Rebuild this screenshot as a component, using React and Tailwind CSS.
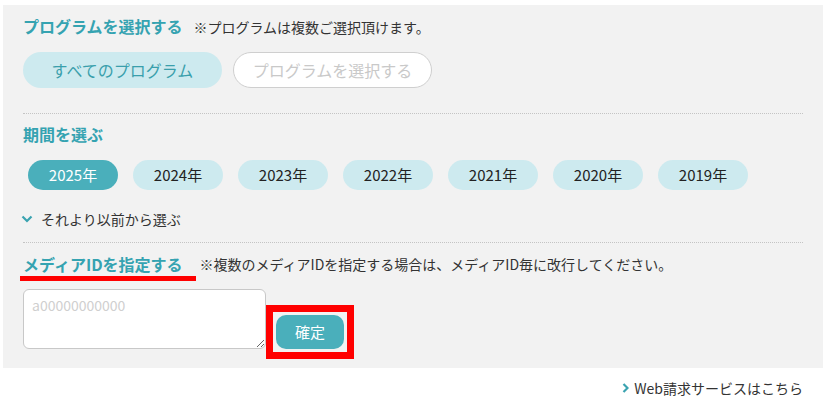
import React from "react";

const years = ["2025年", "2024年", "2023年", "2022年", "2021年", "2020年", "2019年"];

function Heading({children}) {
    return (
        <h2 className="text-[16px] leading-6 font-bold text-[#35a3b1] whitespace-nowrap">
            {children}
        </h2>
    )
}

function Note({children, className = ""}) {
    return (
        <span className={`text-[14px] leading-6 text-[#333] whitespace-nowrap ${className}`}>
            {children}
        </span>
    )
}

function Divider({className = ""}) {
    return <div className={`border-t border-dotted border-[#c4c4c4] ${className}`}/>
}

export default function App() {
    return (
        <div className="w-[829px] h-[403px] bg-white font-['Noto_Sans_CJK_JP','Noto_Sans',sans-serif] overflow-hidden">
            <div className="ml-[3px] mt-[5px] w-[820px] bg-[#f2f2f2] pl-5 pr-5 pt-[9px] pb-[19px]">
                {/* programs */}
                <div className="flex items-baseline gap-[11px]">
                    <Heading>プログラムを選択する</Heading>
                    <Note>※プログラムは複数ご選択頂けます。</Note>
                </div>
                <div className="flex gap-[11px] mt-[13px]">
                    <button className="w-[199px] h-9 rounded-full bg-[#cdeaef] text-[#3a9fac] text-[16px]">
                        すべてのプログラム
                    </button>
                    <button className="w-[199px] h-9 rounded-full bg-white border border-[#cfcfcf] text-[#c9c9c9] text-[16px]">
                        プログラムを選択する
                    </button>
                </div>

                <Divider className="mt-[25px]"/>

                {/* period */}
                <div className="mt-2">
                    <Heading>期間を選ぶ</Heading>
                </div>
                <div className="flex gap-[15px] pl-[5px] mt-[14px]">
                    {years.map((y, i) => (
                        <button
                            key={y}
                            className={i === 0
                                ? "w-[90px] h-[30px] rounded-full bg-[#4aafbb] text-white text-[15px]"
                                : "w-[90px] h-[30px] rounded-full bg-[#cdeaef] text-[#222] text-[15px]"}
                        >
                            {y}
                        </button>
                    ))}
                </div>
                <div className="flex items-center mt-[19px] h-5 -ml-[2px]">
                    <svg width="12" height="8" viewBox="0 0 12 8" className="mr-[8px]">
                        <path d="M1.5 1.5 L6 6 L10.5 1.5" fill="none" stroke="#3aa3b0" strokeWidth="2.2"/>
                    </svg>
                    <span className="text-[14px] leading-5 text-[#333]">それより以前から選ぶ</span>
                </div>

                <Divider className="mt-[13px]"/>

                {/* media id */}
                <div className="flex items-start mt-[9px]">
                    <span className="inline-block -ml-[3px] pl-[3px] pr-[13px] border-b-[5px] border-[#ff0000]">
                        <Heading>メディアIDを指定する</Heading>
                    </span>
                    <Note className="ml-[4px]">※複数のメディアIDを指定する場合は、メディアID毎に改行してください。</Note>
                </div>
                <div className="flex items-end mt-[8px]">
                    <textarea
                        placeholder="a00000000000"
                        className="w-[243px] h-[60px] rounded-[6px] border border-[#c8c8c8] bg-white px-2 py-[5px] text-[14px] leading-5 placeholder-[#cfcfcf] resize-y focus:outline-none"
                    />
                    <div className="border-[7px] border-[#ff0000] p-[3px] -mb-[10px]">
                        <button className="block w-[68px] h-[34px] rounded-[10px] bg-[#4aafbb] text-white text-[15px]">
                            確定
                        </button>
                    </div>
                </div>
            </div>

            <div className="flex justify-end items-center pr-[26px] mt-[10px] h-5">
                <svg width="7" height="10" viewBox="0 0 7 10" className="mr-[5px]">
                    <path d="M1.5 1 L5.5 5 L1.5 9" fill="none" stroke="#3aa3b0" strokeWidth="2.2"/>
                </svg>
                <span className="text-[14px] leading-5 text-[#333]">Web請求サービスはこちら</span>
            </div>
        </div>
    )
}
